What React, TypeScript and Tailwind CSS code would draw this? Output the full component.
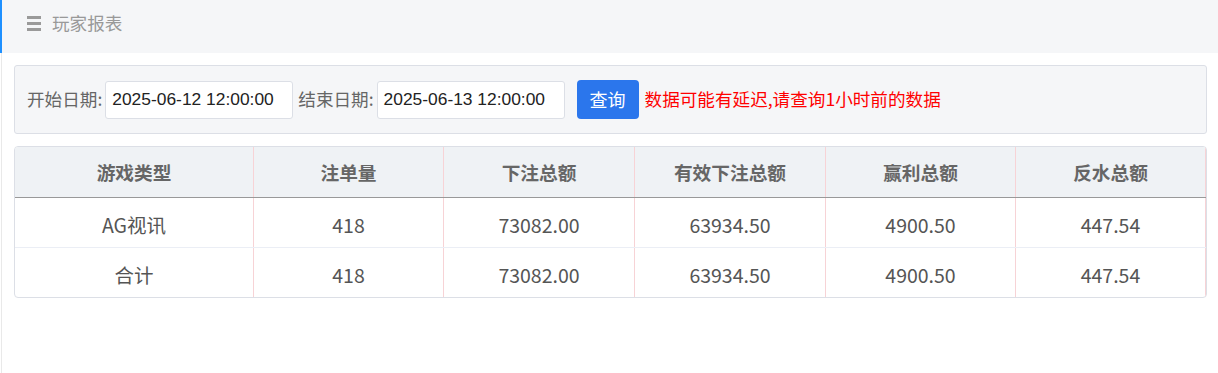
const font = "font-['Noto_Sans_CJK_SC','Noto_Sans',sans-serif]";

const columns = ["游戏类型", "注单量", "下注总额", "有效下注总额", "赢利总额", "反水总额"];

const rows = [
  ["AG视讯", "418", "73082.00", "63934.50", "4900.50", "447.54"],
  ["合计", "418", "73082.00", "63934.50", "4900.50", "447.54"],
];

const colWidths = ["w-[239px]", "w-[190px]", "w-[191px]", "w-[191px]", "w-[190px]", "w-[191px]"];

function DateField({ label, value }: { label: string; value: string }) {
  return (
    <div className="flex items-center">
      <span className="text-[17.6px] text-[#666] mr-[3px]">{label}</span>
      <div className="w-[188px] h-[38px] flex items-center pl-[6px] bg-white border border-[#dcdfe6] rounded-[3px] text-[17.4px] text-[#222] font-['Liberation_Sans','Noto_Sans_CJK_SC',sans-serif]">
        {value}
      </div>
    </div>
  );
}

export default function App() {
  return (
    <div className={`h-[373px] w-[1218px] bg-white flex flex-col ${font}`}>
      {/* top bar */}
      <div className="h-[53px] shrink-0 bg-[#f5f6f8] border-l-2 border-[#1e90ff] flex items-start pt-[10px] pl-[25px]">
        <div className="flex flex-col gap-[3px] mr-[11px] mt-[6px]">
          <div className="w-[14px] h-[3px] bg-[#9a9a9a]" />
          <div className="w-[14px] h-[3px] bg-[#9a9a9a]" />
          <div className="w-[14px] h-[3px] bg-[#9a9a9a]" />
        </div>
        <span className="text-[17.6px] leading-[26px] text-[#999]">玩家报表</span>
      </div>

      <div className="flex-1 ml-px border-l border-[#e9e9e9] pl-[12px] pr-[10px] pt-[12px]">
        {/* filter box */}
        <div className="w-[1193px] h-[69px] bg-[#f5f6f8] border border-[#dcdfe6] rounded-[3px] flex items-center pl-[12px]">
          <DateField label="开始日期:" value="2025-06-12 12:00:00" />
          <div className="ml-[5px]">
            <DateField label="结束日期:" value="2025-06-13 12:00:00" />
          </div>
          <button className="ml-[12px] w-[62px] h-[39px] bg-[#2b76ec] rounded-[4px] text-white text-[18px]">查询</button>
          <span className="ml-[6px] text-[17.6px] text-[#ff0000]">数据可能有延迟,请查询1小时前的数据</span>
        </div>

        {/* table */}
        <div className="mt-[12px] w-[1193px] border border-[#dcdfe6] rounded-[4px] overflow-hidden">
          <div className="flex h-[51px] bg-[#eff2f5] border-b border-[#999]">
            {columns.map((c, i) => (
              <div
                key={c}
                className={`${colWidths[i]} shrink-0 flex items-center justify-center text-[18.7px] font-bold text-[#666] ${i < columns.length - 1 ? "border-r" : "border-r-2"} border-[#f7d3d6]`}
              >
                {c}
              </div>
            ))}
          </div>
          {rows.map((r, ri) => (
            <div key={ri} className={`flex ${ri < rows.length - 1 ? "h-[50px] border-b border-[#ebeef5]" : "h-[49px]"}`}>
              {r.map((v, i) => (
                <div
                  key={i}
                  className={`${colWidths[i]} shrink-0 flex items-center justify-center pt-[4px] text-[19.5px] text-[#555] ${i < r.length - 1 ? "border-r" : "border-r-2"} border-[#f7d3d6]`}
                >
                  {v}
                </div>
              ))}
            </div>
          ))}
        </div>
      </div>
    </div>
  );
}
